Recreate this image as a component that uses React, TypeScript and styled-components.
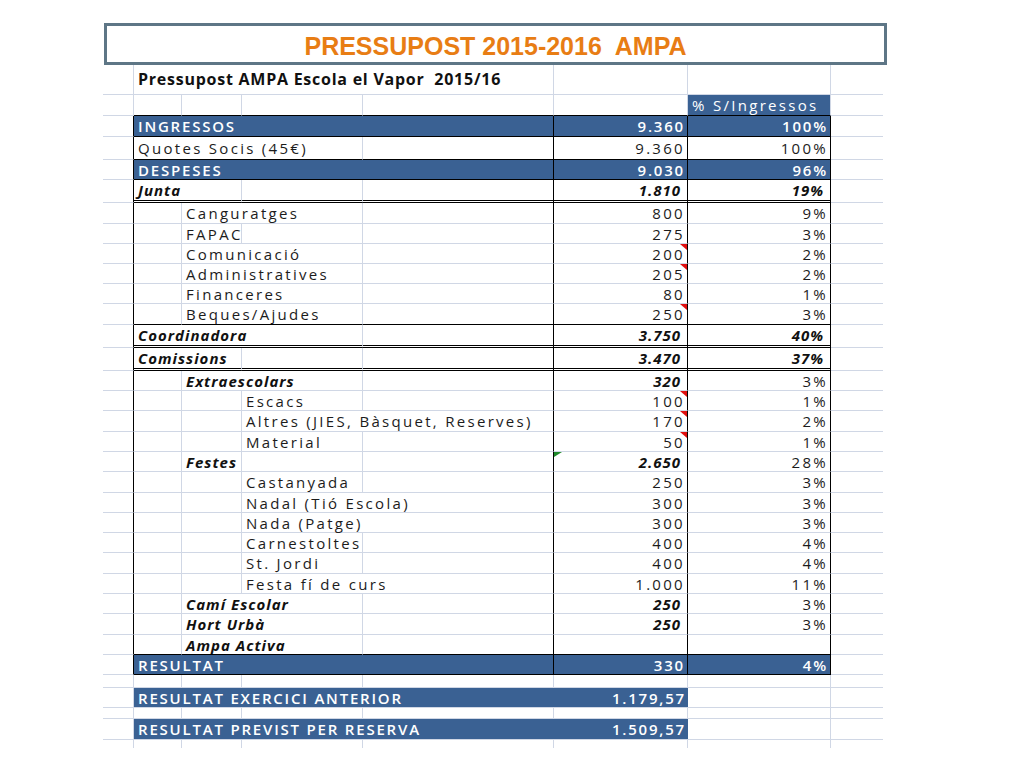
import React from 'react';
import styled, { createGlobalStyle, css } from 'styled-components';

const GlobalStyle = createGlobalStyle`
  html, body { margin: 0; padding: 0; background: #ffffff; }
  body { font-family: "Open Sans", "DejaVu Sans", sans-serif; }
`;

const COLS = '31px 48px 60px 121px 191px 134px 143px 52px';
const GRID = '#D0D7E5';
const BAND = '#3A6193';

type Edge = 'grid' | 'black' | 'double' | 'none';
type Variant = 'plain' | 'bi' | 'head' | 'band' | 'bandLight';
type Mark = 'red' | 'green';

interface CellDef {
  s?: number;
  t?: string;
  v?: Variant;
  r?: Edge;
  b?: Edge;
  a?: 'l' | 'r';
  band?: boolean;
  m?: Mark;
}

interface RowDef {
  h: number;
  cells: CellDef[];
}

const edge = (e: Edge) =>
  e === 'grid'
    ? `1px solid ${GRID}`
    : e === 'black'
    ? '1px solid #000'
    : e === 'double'
    ? '3px double #000'
    : '0';

const variants: Record<Variant, ReturnType<typeof css>> = {
  plain: css`
    font-size: 15px;
    font-weight: 400;
    letter-spacing: 2.3px;
    color: #1c1c1c;
  `,
  bi: css`
    font-size: 15px;
    font-weight: 700;
    font-style: italic;
    letter-spacing: 1px;
    color: #111;
  `,
  head: css`
    font-size: 16px;
    font-weight: 700;
    letter-spacing: 0.75px;
    color: #111;
  `,
  band: css`
    font-size: 15px;
    font-weight: 600;
    letter-spacing: 1.8px;
    color: #ffffff;
  `,
  bandLight: css`
    font-size: 15px;
    font-weight: 400;
    letter-spacing: 2.3px;
    color: #ffffff;
  `,
};

const markCss = (m: Mark) =>
  m === 'red'
    ? css`
        &::after {
          content: '';
          position: absolute;
          top: 0;
          right: 0;
          width: 0;
          height: 0;
          border-top: 6px solid #e01010;
          border-left: 7px solid transparent;
        }
      `
    : css`
        &::after {
          content: '';
          position: absolute;
          top: 0;
          left: 0;
          width: 0;
          height: 0;
          border-top: 5px solid #1f8a2a;
          border-right: 8px solid transparent;
        }
      `;

const Page = styled.div`
  width: 1024px;
  height: 768px;
  box-sizing: border-box;
  padding: 23px 0 0 103px;
  overflow: hidden;
`;

const TitleBox = styled.div`
  margin-left: 1px;
  width: 783px;
  height: 42px;
  box-sizing: border-box;
  border: 3px solid #5e7686;
  display: flex;
  align-items: center;
  justify-content: center;
  padding-top: 4px;
  font-family: "Liberation Sans", Arial, sans-serif;
  font-weight: 700;
  font-size: 25px;
  color: #e87d14;
  white-space: pre;
`;

const Sheet = styled.div`
  display: flex;
  flex-direction: column;
  width: 780px;
`;

const Row = styled.div<{ $h: number }>`
  display: grid;
  grid-template-columns: ${COLS};
  height: ${(p) => p.$h}px;
`;

const Cell = styled.div<{
  $span: number;
  $r: Edge;
  $b: Edge;
  $band: boolean;
  $v: Variant;
  $align: 'l' | 'r';
  $mark?: Mark;
}>`
  grid-column: span ${(p) => p.$span};
  box-sizing: border-box;
  position: relative;
  display: flex;
  align-items: center;
  justify-content: ${(p) => (p.$align === 'r' ? 'flex-end' : 'flex-start')};
  min-width: 0;
  padding: ${(p) =>
    p.$align === 'r' ? (p.$v === 'bi' ? '0 6px 0 0' : '0 2px 0 0') : '0 0 0 4px'};
  border-right: ${(p) => edge(p.$r)};
  border-bottom: ${(p) => edge(p.$b)};
  background: ${(p) => (p.$band ? BAND : 'transparent')};
  white-space: pre;
  line-height: 1.2;
  ${(p) => variants[p.$v]}
  ${(p) => (p.$mark ? markCss(p.$mark) : '')}
`;

const A = (r: Edge = 'grid', b: Edge = 'grid'): CellDef => ({ r, b });
const H = (b: Edge = 'grid'): CellDef => ({ r: 'none', b });

interface BoxOpts {
  b?: Edge;
  fv?: Variant;
  gv?: Variant;
  m?: Mark;
}

const boxRow = (
  h: number,
  start: number,
  span: number,
  text: string,
  v: Variant,
  f: string,
  g: string,
  o: BoxOpts = {}
): RowDef => {
  const b = o.b ?? 'grid';
  const cells: CellDef[] = [A('black')];
  for (let i = 1; i < start; i++) cells.push({ r: 'grid', b });
  cells.push({ s: span, t: text, v, r: start + span - 1 === 4 ? 'black' : 'grid', b });
  for (let i = start + span; i <= 4; i++) cells.push({ r: i === 4 ? 'black' : 'grid', b });
  cells.push({ t: f, v: o.fv ?? 'plain', a: 'r', r: 'black', b, m: o.m });
  cells.push({ t: g, v: o.gv ?? 'plain', a: 'r', r: 'black', b });
  cells.push(H());
  return { h, cells };
};

const bandRow = (h: number, text: string, f: string, g: string): RowDef => ({
  h,
  cells: [
    A('black'),
    { s: 4, t: text, v: 'band', band: true, r: 'black', b: 'black' },
    { t: f, v: 'band', band: true, a: 'r', r: 'black', b: 'black' },
    { t: g, v: 'band', band: true, a: 'r', r: 'black', b: 'black' },
    H(),
  ],
});

const outBand = (h: number, text: string, f: string): RowDef => ({
  h,
  cells: [
    A(),
    { s: 4, t: text, v: 'band', band: true, r: 'none' },
    { t: f, v: 'band', band: true, a: 'r', r: 'none' },
    {},
    H(),
  ],
});

const gapRow = (h: number, b: Edge = 'grid'): RowDef => ({
  h,
  cells: [A('grid', b), { b }, { b }, { b }, { b }, { b }, { b }, H(b)],
});

const rows: RowDef[] = [
  {
    h: 30,
    cells: [A(), { s: 4, t: 'Pressupost AMPA Escola el Vapor  2015/16', v: 'head' }, {}, {}, H()],
  },
  {
    h: 21,
    cells: [
      A(),
      { b: 'black' },
      { b: 'black' },
      { b: 'black' },
      { b: 'black' },
      { b: 'black' },
      { t: '% S/Ingressos', v: 'bandLight', band: true, b: 'black' },
      H(),
    ],
  },
  bandRow(21, 'INGRESSOS', '9.360', '100%'),
  boxRow(23, 1, 3, 'Quotes Socis (45€)', 'plain', '9.360', '100%', { b: 'black' }),
  bandRow(20, 'DESPESES', '9.030', '96%'),
  boxRow(23, 1, 2, 'Junta', 'bi', '1.810', '19%', { b: 'double', fv: 'bi', gv: 'bi' }),
  boxRow(21, 2, 2, 'Canguratges', 'plain', '800', '9%'),
  boxRow(20, 2, 1, 'FAPAC', 'plain', '275', '3%'),
  boxRow(20, 2, 2, 'Comunicació', 'plain', '200', '2%', { m: 'red' }),
  boxRow(20, 2, 2, 'Administratives', 'plain', '205', '2%', { m: 'red' }),
  boxRow(20, 2, 2, 'Financeres', 'plain', '80', '1%'),
  boxRow(21, 2, 2, 'Beques/Ajudes', 'plain', '250', '3%', { m: 'red', b: 'black' }),
  boxRow(23, 1, 3, 'Coordinadora', 'bi', '3.750', '40%', { b: 'double', fv: 'bi', gv: 'bi' }),
  boxRow(23, 1, 2, 'Comissions', 'bi', '3.470', '37%', { b: 'double', fv: 'bi', gv: 'bi' }),
  boxRow(20, 2, 2, 'Extraescolars', 'bi', '320', '3%', { fv: 'bi' }),
  boxRow(20, 3, 1, 'Escacs', 'plain', '100', '1%', { m: 'red' }),
  boxRow(21, 3, 2, 'Altres (JIES, Bàsquet, Reserves)', 'plain', '170', '2%', { m: 'red' }),
  boxRow(20, 3, 1, 'Material', 'plain', '50', '1%', { m: 'red' }),
  boxRow(20, 2, 1, 'Festes', 'bi', '2.650', '28%', { fv: 'bi', m: 'green' }),
  boxRow(21, 3, 1, 'Castanyada', 'plain', '250', '3%'),
  boxRow(20, 3, 2, 'Nadal (Tió Escola)', 'plain', '300', '3%'),
  boxRow(20, 3, 2, 'Nada (Patge)', 'plain', '300', '3%'),
  boxRow(20, 3, 1, 'Carnestoltes', 'plain', '400', '4%'),
  boxRow(21, 3, 1, 'St. Jordi', 'plain', '400', '4%'),
  boxRow(20, 3, 2, 'Festa fí de curs', 'plain', '1.000', '11%'),
  boxRow(20, 2, 2, 'Camí Escolar', 'bi', '250', '3%', { fv: 'bi' }),
  boxRow(21, 2, 2, 'Hort Urbà', 'bi', '250', '3%', { fv: 'bi' }),
  boxRow(20, 2, 2, 'Ampa Activa', 'bi', '', '', { b: 'black' }),
  bandRow(20, 'RESULTAT', '330', '4%'),
  gapRow(13),
  outBand(20, 'RESULTAT EXERCICI ANTERIOR', '1.179,57'),
  gapRow(11),
  outBand(21, 'RESULTAT PREVIST PER RESERVA', '1.509,57'),
  gapRow(8, 'none'),
];

export default function App() {
  return (
    <>
      <GlobalStyle />
      <Page>
        <TitleBox>PRESSUPOST 2015-2016  AMPA</TitleBox>
        <Sheet>
          {rows.map((row, ri) => (
            <Row key={ri} $h={row.h}>
              {row.cells.map((c, ci) => (
                <Cell
                  key={ci}
                  $span={c.s ?? 1}
                  $r={c.r ?? 'grid'}
                  $b={c.b ?? 'grid'}
                  $band={!!c.band}
                  $v={c.v ?? 'plain'}
                  $align={c.a ?? 'l'}
                  $mark={c.m}
                >
                  {c.t ?? ''}
                </Cell>
              ))}
            </Row>
          ))}
        </Sheet>
      </Page>
    </>
  );
}
